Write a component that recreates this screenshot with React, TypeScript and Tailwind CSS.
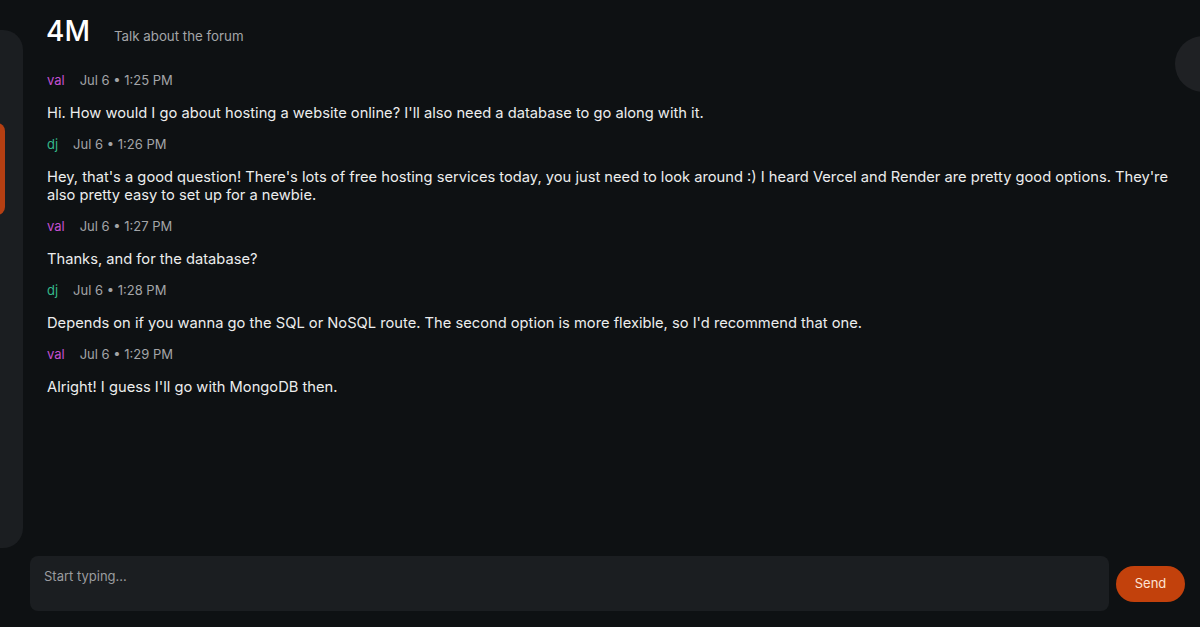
import { useState } from 'react'

interface Message {
  user: 'val' | 'dj'
  time: string
  text: string
}

const messages: Message[] = [
  {
    user: 'val',
    time: 'Jul 6 • 1:25 PM',
    text: "Hi. How would I go about hosting a website online? I'll also need a database to go along with it.",
  },
  {
    user: 'dj',
    time: 'Jul 6 • 1:26 PM',
    text: "Hey, that's a good question! There's lots of free hosting services today, you just need to look around :) I heard Vercel and Render are pretty good options. They're also pretty easy to set up for a newbie.",
  },
  { user: 'val', time: 'Jul 6 • 1:27 PM', text: 'Thanks, and for the database?' },
  {
    user: 'dj',
    time: 'Jul 6 • 1:28 PM',
    text: "Depends on if you wanna go the SQL or NoSQL route. The second option is more flexible, so I'd recommend that one.",
  },
  { user: 'val', time: 'Jul 6 • 1:29 PM', text: "Alright! I guess I'll go with MongoDB then." },
]

const userColor = {
  val: 'text-[#c44fd0]',
  dj: 'text-[#34b98a]',
}

function ChatMessage({ message }: { message: Message }) {
  return (
    <div className="flex flex-col">
      <div className="flex items-baseline gap-[15px] text-[13px] leading-4 mb-4">
        <span className={userColor[message.user]}>{message.user}</span>
        <span className="text-[#a3a5a8]">{message.time}</span>
      </div>
      <p className="text-[14.7px] leading-[18px] text-[#eceded]">{message.text}</p>
    </div>
  )
}

export default function App() {
  const [draft, setDraft] = useState('')

  return (
    <div
      className="relative flex h-[627px] w-[1200px] overflow-hidden bg-[#0e1113]"
      style={{ fontFamily: 'Inter, "Noto Sans", sans-serif' }}
    >
      <aside className="-ml-[177px] mt-[30px] h-[518px] w-[200px] shrink-0 rounded-[20px] bg-[#1b1e21] pt-[93px] pr-[18px]">
        <div className="h-[92px] w-full rounded-r-lg bg-[#b53f12]" />
      </aside>

      <main className="flex flex-1 flex-col pl-[7px] pr-[15px]">
        <header className="flex items-baseline gap-6 pl-[16px] pt-[13px]">
          <h1 className="text-[28px] leading-9 font-medium text-white">4M</h1>
          <span className="text-[13.3px] text-[#a3a5a8]">Talk about the forum</span>
        </header>

        <section className="mt-[23px] flex flex-1 flex-col gap-[14px] pl-[17px]">
          {messages.map((m, i) => (
            <ChatMessage key={i} message={m} />
          ))}
        </section>

        <div className="mb-4 flex items-center gap-[7px]">
          <textarea
            value={draft}
            onChange={(e) => setDraft(e.target.value)}
            placeholder="Start typing..."
            className="h-[55px] flex-1 resize-none rounded-lg bg-[#1b1e21] px-[14px] py-[12px] text-[13px] leading-4 text-[#eceded] placeholder:text-[#9a9c9f] outline-none"
          />
          <button className="h-9 w-[69px] rounded-full bg-[#c2410c] text-[13px] text-[#fde3d4]">
            Send
          </button>
        </div>
      </main>

      <div className="absolute left-[1175px] top-[36px] h-[56px] w-[56px] rounded-full bg-[#1f2124]" />
    </div>
  )
}
